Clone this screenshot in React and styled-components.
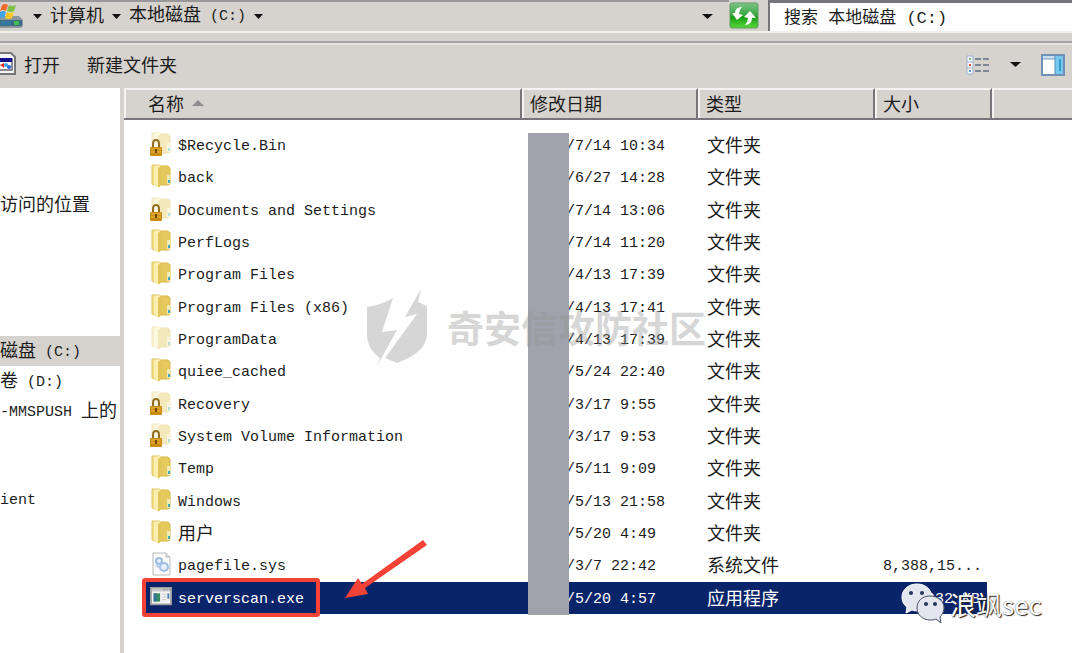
import React, { useState } from "react";
import styled, { createGlobalStyle } from "styled-components";

const GlobalStyle = createGlobalStyle`
  * {
    box-sizing: border-box;
  }

  body {
    margin: 0;
    background: #fff;
    color: #1c1c1c;
    font: 18px/24px "Noto Sans CJK SC", sans-serif;
  }

  button, input {
    font: inherit;
    color: inherit;
    border: 0;
    padding: 0;
    background: none;
  }
`;

const SWindow = styled.div`
  display: flex;
  flex-direction: column;
  min-height: 100vh;
  padding-right: 8px;
  overflow: hidden;
`;

const SLatin = styled.span`
  font-family: "Liberation Mono", monospace;
  font-size: 15px;
  line-height: 20px;
  vertical-align: 1px;
  white-space: pre;
`;

const SAddressBar = styled.header`
  display: flex;
  height: 33px;
  border-bottom: 2px solid #f0efec;
  background: #d6d3ce;
`;

const SCrumbs = styled.nav`
  flex: 1;
  display: flex;
  align-items: center;
  gap: 8px;
  border-top: 2px solid #9a9799;
`;

const SCrumb = styled.button`
  padding-bottom: 6px;
  white-space: nowrap;
`;

const SIconButton = styled.button`
  display: flex;
`;

const SRefresh = styled(SIconButton)`
  align-items: center;
  margin-right: 2px;
`;

const SSearch = styled.input`
  width: 304px;
  margin-left: 7px;
  padding: 0 14px 4px;
  border: solid #77757a;
  border-width: 3px 0 0 2px;
  background: #fff;
  font: 17px "Liberation Mono", "Noto Sans CJK SC", monospace;
`;

const SToolbar = styled.div`
  display: flex;
  align-items: center;
  height: 55px;
  border-top: 8px solid #d6d3ce;
  background: #d6d3ce;
  box-shadow: inset 0 2px #a5a5a9, inset 0 4px #e6e4e1;
`;

const SCommand = styled.button`
  display: flex;
  align-items: center;
  gap: 8px;
  margin-right: 27px;
  padding-bottom: 2px;
`;

const STools = styled.div`
  display: flex;
  align-items: center;
  gap: 20px;
  margin-left: auto;
  padding-right: ${(props) => props.$end || 7}px;
`;

const SBody = styled.div`
  flex: 1;
  display: flex;
`;

const SSidebar = styled.nav`
  flex: 0 0 124px;
  padding-top: 102px;
  border-right: 4px solid #d6d3ce;
  overflow: hidden;
`;

const SGroup = styled.div`
  margin-bottom: ${(props) => props.$after}px;
`;

const SPlace = styled.a`
  display: block;
  height: 30px;
  padding-top: 1px;
  color: inherit;
  text-decoration: none;
  white-space: nowrap;
  background: ${(props) => (props.$active ? "#d6d3ce" : "none")};
`;

const SPane = styled.main`
  position: relative;
  flex: 1;
  min-width: 0;
`;

const STable = styled.table`
  display: block;
`;

const SHead = styled.thead`
  display: block;

  tr {
    display: grid;
    grid-template-columns: 398px 176px 177px 117px 1fr;
    height: 32px;
    background: #d6d3ce;
    border-bottom: 2px solid #77757a;
  }
`;

const SHeading = styled.th`
  display: flex;
  align-items: center;
  gap: 8px;
  padding: 0 0 2px ${(props) => (props.$first ? 24 : 8)}px;
  border-top: 2px solid #f4f3f1;
  border-right: ${(props) => (props.$last ? 0 : 2)}px solid #77757a;
  box-shadow: inset 2px 0 #f4f3f1;
  font-weight: 400;
`;

const SRows = styled.tbody`
  display: grid;
  grid-template-rows: repeat(15, minmax(0, 1fr));
  height: 485px;
  margin: 9px 0 0 19px;
`;

const SRow = styled.tr`
  display: grid;
  grid-template-columns: 385px 172px 176px 111px;
  align-items: center;
  width: 844px;
  color: ${(props) => (props.$selected ? "#fff" : "inherit")};
  background: ${(props) => (props.$selected ? "#0a246a" : "none")};
`;

const SCell = styled.td`
  padding: 0 7px 2px;
  text-align: ${(props) => (props.$right ? "right" : "left")};
  white-space: nowrap;
`;

const SDateCell = styled(SCell)`
  padding-left: 38px;
`;

const SName = styled.div`
  display: flex;
  align-items: center;
  gap: 6px;
`;

const SMask = styled.div`
  position: absolute;
  top: 45px;
  left: 404px;
  width: 41px;
  height: 482px;
  background: #a1a2ab;
`;

const SWatermark = styled.div`
  position: absolute;
  top: 199px;
  left: 242px;
  display: flex;
  align-items: center;
  gap: 19px;
  color: #969696;
  opacity: 0.38;
  font-size: 37px;
  font-weight: 700;
  white-space: nowrap;
  pointer-events: none;
`;

const SFrame = styled.div`
  position: absolute;
  top: 490px;
  left: 18px;
  width: 178px;
  height: 39px;
  border: 4px solid #f44336;
  border-radius: 3px;
`;

const SArrow = styled.svg`
  position: absolute;
  top: 450px;
  left: 220px;
`;

const SSignature = styled.div`
  position: absolute;
  top: 495px;
  left: 777px;
  display: flex;
  align-items: center;
  gap: 5px;
  color: #fff;
  font-size: 26px;
  font-weight: 400;
  white-space: nowrap;
  text-shadow: 1px 1px 1px #222, 0 0 1px #555;
`;

function Label({ text }) {
  return text
    .split(/([\x20-\x7e]+)/)
    .filter(Boolean)
    .map((part, i) =>
      /^[\x20-\x7e]/.test(part) ? <SLatin key={i}>{part}</SLatin> : part
    );
}

function Caret({ width = 9 }) {
  return (
    <svg width={width} height="5" viewBox="0 0 10 5" preserveAspectRatio="none">
      <path d="M0 0h10L5 5z" fill="#111" />
    </svg>
  );
}

function DriveIcon() {
  return (
    <svg width="25" height="26" viewBox="0 0 25 26">
      <path d="M-2 15 2 12h17l4 4v6l-2 2H-2z" fill="#8b969d" />
      <path d="M-2 16h24v6H-2z" fill="#3c6b83" />
      <path d="M1 17h10v4H1z" fill="#3779a0" />
      <path d="M14 17h5v4h-5z" fill="#40bd4f" />
      <path d="M2 1q3-2 6 0L6 7Q3 5 0 7z" fill="#ef6a2c" />
      <path d="M9 1q3 2 7 0l-2 6q-3 2-7 0z" fill="#7cc142" />
      <path d="M0 8q3-2 6 0l-2 6q-2-1-4 0z" fill="#3da4e2" />
      <path d="M7 8q3 2 7 0l-2 6q-3 2-7 0z" fill="#fcc725" />
    </svg>
  );
}

function RefreshIcon() {
  return (
    <svg width="30" height="27" viewBox="0 0 30 27">
      <defs>
        <linearGradient id="green" x2="0" y2="1">
          <stop offset="0" stopColor="#7fc58a" />
          <stop offset=".5" stopColor="#32a53c" />
          <stop offset=".55" stopColor="#139c13" />
          <stop offset="1" stopColor="#58d83a" />
        </linearGradient>
      </defs>
      <rect x="1" y="1" width="28" height="25" rx="2" fill="url(#green)" stroke="#5f9a60" />
      <path d="M13 5Q6 5 6 11H3l5 7 6-5-4-1q0-4 3-7z" fill="#fff" />
      <path d="M16 23q7 0 7-7h4l-6-7-6 6 4 1q0 4-3 7z" fill="#fff" />
    </svg>
  );
}

function AppIcon() {
  return (
    <svg width="16" height="24" viewBox="0 0 16 24">
      <path d="M-3 1h14l4 4v17H-3z" fill="#f5f5f5" stroke="#777" strokeWidth="2" />
      <path d="M-2 7h14v11H-2z" fill="#fff" stroke="#667" strokeWidth="1.5" />
      <path d="M-2 6h14v4H-2z" fill="#10108c" />
      <path d="m0 13 4-2v5z" fill="#e8321f" />
      <circle cx="6" cy="13" r="2" fill="#3fa3f5" />
      <circle cx="9" cy="15" r="2" fill="#1f65d8" />
    </svg>
  );
}

function ListIcon() {
  return (
    <svg width="24" height="20" viewBox="0 0 24 20">
      <path d="M1 1h6v18H1zM1 7h6M1 13h6" fill="#f8fafd" stroke="#9fb0cc" />
      <path d="M3 3h2v2H3z" fill="#75b58a" />
      <path d="M3 9h2v2H3z" fill="#e5533f" />
      <path d="M3 15h2v2H3z" fill="#5a93d6" />
      <path
        d="M9 4h6M17 4h6M9 10h6M17 10h6M9 16h6M17 16h6"
        stroke="#7d8795"
        strokeWidth="2"
      />
    </svg>
  );
}

function PaneIcon() {
  return (
    <svg width="24" height="22" viewBox="0 0 24 22">
      <path d="M1 1h22v20H1z" fill="#fff" stroke="#6f8fb5" strokeWidth="2" />
      <path d="M2 2h20v3H2z" fill="#c9dcf2" />
      <path d="M2 5h12" stroke="#7d9cc2" />
      <path d="M14 2h8v18h-8z" fill="#75c9ec" />
      <path d="M18 5h2v12h-2z" fill="#369acb" />
      <path d="M14 2v18" stroke="#5b8cb8" />
    </svg>
  );
}

function FolderIcon({ faded, locked }) {
  return (
    <svg width="22" height="26" viewBox="0 0 22 26">
      <g opacity={faded || locked ? 0.4 : 1}>
        <path d="M9 3h9l2 2v16l-2 1H9z" fill="#e6c95c" stroke="#d9ba4c" />
        <path d="M17 12h3v9h-3z" fill="#f2e8b4" />
        <path d="M18 17h2v3h-2z" fill="#3fa9ba" />
        <path d="M2 2h8v20l-1 2-7-3z" fill="#f0dc83" stroke="#e2c968" />
        <path d="M4 3 11 2v20l-4 2-3-2z" fill="#faeeb0" />
        <path d="M12 2v20l-4 2V5z" fill="#e3c65a" />
      </g>
      {locked && (
        <g>
          <path d="M3 17v-4q0-4 3-4t3 4v4" fill="none" stroke="#8f6b1f" strokeWidth="2" />
          <rect x="0" y="16" width="12" height="9" rx="1" fill="#c98d16" />
          <path d="M1 18h10M1 21h10" stroke="#e9b843" />
          <path d="M6 18v4" stroke="#6f4a08" strokeWidth="2" />
        </g>
      )}
    </svg>
  );
}

function SystemFileIcon() {
  return (
    <svg width="22" height="24" viewBox="0 0 22 24">
      <path d="M3 1h13l4 4v18H3z" fill="#fbfbfb" stroke="#b9b9b9" />
      <path d="M16 1v4h4" fill="#e4e4e4" stroke="#b9b9b9" />
      <circle cx="9" cy="9" r="3" fill="#e5eefa" stroke="#9ebbe0" strokeWidth="2" />
      <circle cx="14" cy="15" r="4" fill="#e5eefa" stroke="#9ebbe0" strokeWidth="2" />
      <path d="m6 13 5 4" stroke="#b4cae6" strokeWidth="2" />
    </svg>
  );
}

function ProgramIcon() {
  return (
    <svg width="22" height="22" viewBox="0 0 24 24">
      <path d="M1 2h22v18H1z" fill="#f4f4f4" stroke="#9c9c9c" strokeWidth="2" />
      <path d="M2 3h20v3H2z" fill="#c9c9cc" />
      <path d="M15 4h1M18 4h1M21 4h1" stroke="#555" />
      <path d="M4 8h7v9H4z" fill="#388c63" />
      <path d="M4 8h3v9H4z" fill="#35719c" />
      <path d="M13 9h5M13 12h5M13 15h5" stroke="#c3c3c3" />
      <path d="M20 8v6" stroke="#4a7fae" strokeWidth="2" />
    </svg>
  );
}

function FileIcon({ kind }) {
  if (kind === "system") return <SystemFileIcon />;
  if (kind === "program") return <ProgramIcon />;
  return <FolderIcon faded={kind === "hidden"} locked={kind === "locked"} />;
}

function ShieldLogo() {
  return (
    <svg width="62" height="80" viewBox="0 0 62 80" fill="currentColor">
      <path d="M1 20Q15 18 27 11L16 45l15-2-20 36 3-8Q1 62 1 47z" />
      <path d="M55 2 39 30l12-3-32 44 12 5q30-11 30-29V19l-9-4z" />
    </svg>
  );
}

function WechatLogo() {
  return (
    <svg width="44" height="42" viewBox="0 0 44 42">
      <path
        d="M16 1C7 1 1 7 1 14c0 5 2 8 5 10l-1 6 6-3c2 1 5 1 7 1 8 0 13-6 13-13C31 7 25 1 16 1z"
        fill="#e3e6ef"
        stroke="#fff"
      />
      <path
        d="M29 13c-8 0-13 5-13 12s6 12 13 12c2 0 4 0 6-1l5 4-1-6c2-2 4-5 4-9 0-7-6-12-14-12z"
        fill="#e3e6ef"
        stroke="#4b5268"
      />
      <g fill="#26345f">
        <circle cx="10" cy="10" r="2" />
        <circle cx="21" cy="10" r="2" />
        <circle cx="25" cy="21" r="2" />
        <circle cx="34" cy="21" r="2" />
      </g>
    </svg>
  );
}

const places = [
  { after: 116, items: ["访问的位置"] },
  { after: 58, items: ["磁盘 (C:)", "卷 (D:)", "-MMSPUSH 上的"] },
  { after: 0, items: ["ient"] },
];

const files = [
  { name: "$Recycle.Bin", date: "/7/14 10:34", type: "文件夹", kind: "locked" },
  { name: "back", date: "/6/27 14:28", type: "文件夹" },
  { name: "Documents and Settings", date: "/7/14 13:06", type: "文件夹", kind: "locked" },
  { name: "PerfLogs", date: "/7/14 11:20", type: "文件夹" },
  { name: "Program Files", date: "/4/13 17:39", type: "文件夹" },
  { name: "Program Files (x86)", date: "/4/13 17:41", type: "文件夹" },
  { name: "ProgramData", date: "/4/13 17:39", type: "文件夹", kind: "hidden" },
  { name: "quiee_cached", date: "/5/24 22:40", type: "文件夹" },
  { name: "Recovery", date: "/3/17 9:55", type: "文件夹", kind: "locked" },
  { name: "System Volume Information", date: "/3/17 9:53", type: "文件夹", kind: "locked" },
  { name: "Temp", date: "/5/11 9:09", type: "文件夹" },
  { name: "Windows", date: "/5/13 21:58", type: "文件夹" },
  { name: "用户", date: "/5/20 4:49", type: "文件夹" },
  { name: "pagefile.sys", date: "/3/7 22:42", type: "系统文件", size: "8,388,15...", kind: "system" },
  { name: "serverscan.exe", date: "/5/20 4:57", type: "应用程序", size: "2,932 KB", kind: "program" },
];

function App() {
  const [query, setQuery] = useState("搜索 本地磁盘 (C:)");
  const [selected, setSelected] = useState("serverscan.exe");

  return (
    <SWindow>
      <GlobalStyle />
      <SAddressBar>
        <SCrumbs aria-label="地址">
          <DriveIcon />
          <SIconButton aria-label="展开"><Caret /></SIconButton>
          <SCrumb>计算机</SCrumb>
          <SIconButton aria-label="展开计算机"><Caret /></SIconButton>
          <SCrumb><Label text="本地磁盘 (C:)" /></SCrumb>
          <SIconButton aria-label="展开本地磁盘"><Caret /></SIconButton>
          <STools $end={16}>
            <SIconButton aria-label="历史记录"><Caret width={11} /></SIconButton>
          </STools>
        </SCrumbs>
        <SRefresh aria-label="刷新"><RefreshIcon /></SRefresh>
        <SSearch
          aria-label="搜索"
          value={query}
          onChange={(e) => setQuery(e.target.value)}
        />
      </SAddressBar>
      <SToolbar>
        <SCommand>
          <AppIcon />
          打开
        </SCommand>
        <SCommand>新建文件夹</SCommand>
        <STools>
          <SIconButton aria-label="更改视图"><ListIcon /></SIconButton>
          <SIconButton aria-label="更多选项"><Caret width={11} /></SIconButton>
          <SIconButton aria-label="预览窗格"><PaneIcon /></SIconButton>
        </STools>
      </SToolbar>
      <SBody>
        <SSidebar aria-label="位置">
          {places.map((group) => (
            <SGroup key={group.items[0]} $after={group.after}>
              {group.items.map((item) => (
                <SPlace key={item} href="#" $active={item === "磁盘 (C:)"}>
                  <Label text={item} />
                </SPlace>
              ))}
            </SGroup>
          ))}
        </SSidebar>
        <SPane>
          <STable>
            <SHead>
              <tr>
                <SHeading $first>
                  名称
                  <svg width="12" height="6" viewBox="0 0 12 6">
                    <path d="M6 0l6 6H0z" fill="#8d8b8d" />
                  </svg>
                </SHeading>
                <SHeading>修改日期</SHeading>
                <SHeading>类型</SHeading>
                <SHeading>大小</SHeading>
                <SHeading as="td" $last />
              </tr>
            </SHead>
            <SRows>
              {files.map((file) => (
                <SRow
                  key={file.name}
                  $selected={file.name === selected}
                  onClick={() => setSelected(file.name)}
                >
                  <SCell>
                    <SName>
                      <FileIcon kind={file.kind} />
                      <span><Label text={file.name} /></span>
                    </SName>
                  </SCell>
                  <SDateCell><Label text={file.date} /></SDateCell>
                  <SCell>{file.type}</SCell>
                  <SCell $right>{file.size && <Label text={file.size} />}</SCell>
                </SRow>
              ))}
            </SRows>
          </STable>
          <SMask />
          <SWatermark>
            <ShieldLogo />
            奇安信攻防社区
          </SWatermark>
          <SFrame />
          <SArrow width="84" height="64" viewBox="0 0 84 64">
            <path d="M79 2l4 5-62 43 3 6-23 4 13-20 4 6z" fill="#f44336" />
          </SArrow>
          <SSignature>
            <WechatLogo />
            浪飒sec
          </SSignature>
        </SPane>
      </SBody>
    </SWindow>
  );
}

export default App;
